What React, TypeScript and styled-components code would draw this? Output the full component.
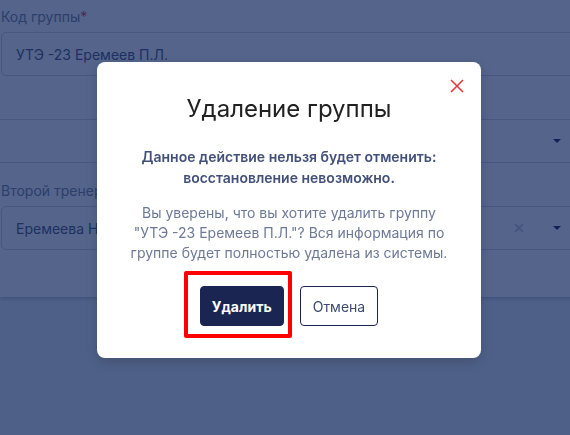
import React from "react";
import styled, { createGlobalStyle } from "styled-components";

const GlobalStyle = createGlobalStyle`
  html, body {
    margin: 0;
    padding: 0;
  }
  body {
    background: #ebf1f4;
    font-family: Inter, "Noto Sans", sans-serif;
    overflow: hidden;
  }
  * {
    box-sizing: border-box;
  }
`;

const Page = styled.div`
  width: 570px;
  height: 435px;
  overflow: hidden;
`;

const FormCard = styled.div`
  width: 602px;
  background: #ffffff;
  padding: 7px 0 47px 1px;
  display: flex;
  flex-direction: column;
  gap: 18px;
  box-shadow: 0 2px 3px rgba(0, 0, 0, 0.18);
`;

const Field = styled.div<{ $shift?: number }>`
  display: flex;
  flex-direction: column;
  gap: 5px;
  margin-left: ${(p) => (p.$shift ? `${p.$shift}px` : "0")};
`;

const Label = styled.label`
  height: 20px;
  font-size: 14px;
  line-height: 20px;
  color: #7b8193;

  span {
    color: #d23a48;
  }
`;

const InputBox = styled.div`
  height: 44px;
  border: 1px solid #d2d6de;
  border-radius: 5px;
  padding: 0 40px 0 14px;
  display: flex;
  align-items: center;
  font-size: 14px;
  color: #4c5374;
`;

const Value = styled.div`
  flex: 1;
  white-space: nowrap;
  overflow: hidden;
`;

const Clear = styled.svg`
  width: 10px;
  height: 10px;
  margin-right: 29px;
`;

const Caret = styled.div`
  width: 0;
  height: 0;
  border-left: 4px solid transparent;
  border-right: 4px solid transparent;
  border-top: 4px solid #17215a;
`;

const Overlay = styled.div`
  position: fixed;
  inset: 0;
  background: rgba(11, 34, 88, 0.7);
  display: flex;
  justify-content: center;
  align-items: flex-start;
  padding: 62px 0 0 8px;
`;

const Modal = styled.div`
  position: relative;
  width: 384px;
  background: #ffffff;
  border-radius: 8px;
  padding: 32px 20px 32px;
  text-align: center;
  box-shadow: 0 4px 12px rgba(0, 0, 0, 0.15);
`;

const CloseButton = styled.button`
  position: absolute;
  top: 17px;
  right: 17px;
  width: 14px;
  height: 14px;
  padding: 0;
  border: none;
  background: none;
  cursor: pointer;
  display: flex;
`;

const Title = styled.h2`
  margin: 0;
  font-size: 24px;
  line-height: 30px;
  font-weight: 400;
  color: #212121;
`;

const Warning = styled.p`
  margin: 22px 0 0;
  font-size: 14px;
  line-height: 21px;
  font-weight: 600;
  color: #42507a;
`;

const Text = styled.p`
  margin: 15px 0 0;
  font-size: 14px;
  line-height: 20px;
  color: #6d7997;
`;

const Actions = styled.div`
  margin-top: 23px;
  display: flex;
  justify-content: center;
  gap: 16px;
`;

const Highlight = styled.span`
  position: relative;
  display: flex;

  &::after {
    content: "";
    position: absolute;
    top: -15px;
    left: -16px;
    right: -8px;
    bottom: -12px;
    border: 4px solid #ff0000;
    border-radius: 2px;
    pointer-events: none;
  }
`;

const Button = styled.button<{ $primary?: boolean }>`
  height: 40px;
  padding: 0 ${(p) => (p.$primary ? "11px" : "12px")};
  border-radius: 4px;
  font-family: Inter, "Noto Sans", sans-serif;
  font-size: 14px;
  font-weight: ${(p) => (p.$primary ? 700 : 400)};
  border: 1px solid #1a2552;
  background: ${(p) => (p.$primary ? "#1a2552" : "#ffffff")};
  color: ${(p) => (p.$primary ? "#ffffff" : "#3e4b70")};
  cursor: pointer;
`;

function CrossIcon({ color, width }: { color: string; width: number }) {
  return (
    <svg width="14" height="14" viewBox="0 0 14 14">
      <path d="M1 1 L13 13 M13 1 L1 13" stroke={color} strokeWidth={width} />
    </svg>
  );
}

export default function App() {
  return (
    <Page>
      <GlobalStyle />
      <FormCard>
        <Field>
          <Label>
            Код группы<span>*</span>
          </Label>
          <InputBox>
            <Value>УТЭ -23 Еремеев П.Л.</Value>
          </InputBox>
        </Field>
        <Field $shift={-12}>
          <Label />
          <InputBox>
            <Value />
            <Caret />
          </InputBox>
        </Field>
        <Field>
          <Label>Второй тренер</Label>
          <InputBox>
            <Value>Еремеева Н.А.</Value>
            <Clear viewBox="0 0 10 10">
              <path d="M1 1 L9 9 M9 1 L1 9" stroke="#c9ced8" strokeWidth="2" />
            </Clear>
            <Caret />
          </InputBox>
        </Field>
      </FormCard>

      <Overlay>
        <Modal>
          <CloseButton aria-label="Закрыть">
            <CrossIcon color="#e5383b" width={1.6} />
          </CloseButton>
          <Title>Удаление группы</Title>
          <Warning>
            Данное действие нельзя будет отменить:
            <br />
            восстановление невозможно.
          </Warning>
          <Text>
            Вы уверены, что вы хотите удалить группу
            <br />
            "УТЭ -23 Еремеев П.Л."? Вся информация по
            <br />
            группе будет полностью удалена из системы.
          </Text>
          <Actions>
            <Highlight>
              <Button $primary>Удалить</Button>
            </Highlight>
            <Button>Отмена</Button>
          </Actions>
        </Modal>
      </Overlay>
    </Page>
  );
}
